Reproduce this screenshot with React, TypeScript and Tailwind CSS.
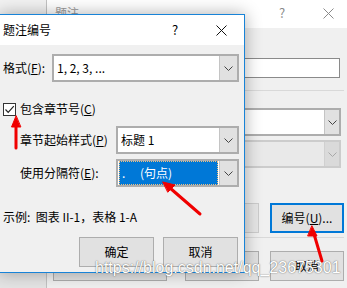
import React from "react"

const font = { fontFamily: '"Noto Sans CJK SC", "Noto Sans", sans-serif' }

function Chevron({ dim = false }: { dim?: boolean }) {
    return (
        <svg width="9" height="5" viewBox="0 0 9 5">
            <polyline points="0.5,0.5 4.5,4.5 8.5,0.5" fill="none" stroke={dim ? "#a8a8a8" : "#444"} strokeWidth="1" />
        </svg>
    )
}

function Combo({ w, children, btn = 18 }: { w: string; children?: React.ReactNode; btn?: number }) {
    return (
        <div className={`${w} h-[28px] flex border-2 border-[#adadad] bg-white`}>
            <div className="flex-1 flex items-center min-w-0">{children}</div>
            <div className="h-full flex items-center justify-center bg-[#e1e1e1] border-l border-[#c4c4c4]" style={{ width: btn }}>
                <Chevron />
            </div>
        </div>
    )
}

function Btn({ w, children, focus = false }: { w: string; children: React.ReactNode; focus?: boolean }) {
    return (
        <div className={`${w} h-[30px] flex items-center justify-center bg-[#e1e1e1] text-[12px] text-black ${focus ? "border-2 border-[#0078d7]" : "border border-[#adadad]"}`}>
            {children}
        </div>
    )
}

function CloseX({ color }: { color: string }) {
    return (
        <svg width="11" height="11" viewBox="0 0 11 11">
            <line x1="0.5" y1="0.5" x2="10.5" y2="10.5" stroke={color} strokeWidth="1" />
            <line x1="10.5" y1="0.5" x2="0.5" y2="10.5" stroke={color} strokeWidth="1" />
        </svg>
    )
}

export default function App() {
    return (
        <div className="relative w-[347px] h-[288px] overflow-hidden bg-[#e4e4e4]" style={font}>
            {/* window behind, top-left */}
            <div className="absolute left-0 top-0 w-[46px] h-[20px] bg-[#f2f2f2]" />

            {/* Background dialog: 题注 */}
            <div className="absolute left-[46px] top-[-2px] w-[305px] h-[300px] border-l border-[#c2c2c2] bg-[#f0f0f0] flex flex-col">
                <div className="h-[30px] bg-white flex items-center">
                    <span className="flex-1 pl-[8px] text-[12px] text-[#9a9a9a]">题注</span>
                    <div className="w-[46px] h-full flex items-center justify-center text-[13px] text-[#8a8a8a]">?</div>
                    <div className="w-[46px] h-full flex items-center justify-center"><CloseX color="#8a8a8a" /></div>
                </div>
                <div className="mt-[30px] self-end mr-[11px] w-[200px] h-[20px] bg-white border border-[#8a8a8a]" />
                <div className="mt-[12px] self-end mr-[7px] w-[250px] h-px bg-[#d9d9d9]" />
                <div className="mt-[17px] self-end mr-[10px]">
                    <Combo w="w-[220px]" btn={15} />
                </div>
                <div className="mt-[4px] self-end mr-[10px] w-[220px] h-[28px] flex border-2 border-[#cccccc] bg-[#e9e9e9]">
                    <div className="flex-1" />
                    <div className="w-[15px] h-full flex items-center justify-center bg-[#dadada] border-l border-[#d0d0d0]">
                        <Chevron dim />
                    </div>
                </div>
                <div className="mt-[35px] self-end mr-[7px] flex gap-[11px]">
                    <div className="w-[74px] h-[30px] flex items-center justify-center bg-[#e6e6e6] border border-[#cccccc] text-[12px] text-[#a0a0a0]">标签(L)</div>
                    <Btn w="w-[74px]" focus>编号(<u>U</u>)...</Btn>
                </div>
                <div className="mt-[4px] self-end mr-[7px] w-[250px] h-px bg-[#d9d9d9]" />
                <div className="mt-[13px] flex pl-[6px]">
                    <Btn w="w-[114px]">自动插入题注(A)...</Btn>
                    <div className="ml-[18px]"><Btn w="w-[74px]">确定</Btn></div>
                    <div className="ml-[11px]"><Btn w="w-[74px]">取消</Btn></div>
                </div>
            </div>

            {/* Front dialog: 题注编号 */}
            <div className="absolute left-[-1px] top-[14px] w-[246px] h-[259px] border border-[#1883d7] bg-[#f0f0f0] shadow-[0_0_16px_rgba(0,0,0,0.32)] flex flex-col text-[12px] text-black">
                <div className="h-[30px] bg-white flex items-center">
                    <span className="flex-1 pl-[3px] text-[12px]">题注编号</span>
                    <div className="w-[46px] h-full flex items-center justify-center text-[13px]">?</div>
                    <div className="w-[46px] h-full flex items-center justify-center"><CloseX color="#111" /></div>
                </div>

                <div className="mt-[9px] flex items-center">
                    <span className="w-[52px] pl-[3px]">格式(<u>F</u>):</span>
                    <Combo w="w-[187px]">
                        <span className="pl-[3px] text-[12px]">1, 2, 3, ...</span>
                    </Combo>
                </div>

                <div className="mt-[18px] flex items-center pl-[3px] gap-[4px]">
                    <div className="w-[13px] h-[13px] border border-[#333] bg-white flex items-center justify-center">
                        <svg width="11" height="11" viewBox="0 0 11 11">
                            <polyline points="1.5,5.5 4.2,8.3 9.8,2.2" fill="none" stroke="#222" strokeWidth="1.2" />
                        </svg>
                    </div>
                    <span>包含章节号(<u>C</u>)</span>
                </div>

                <div className="mt-[8px] flex items-center">
                    <span className="w-[116px] pl-[20px]">章节起始样式(<u>P</u>)</span>
                    <Combo w="w-[123px]">
                        <span className="pl-[3px]">标题 1</span>
                    </Combo>
                </div>

                <div className="mt-[5px] flex items-center">
                    <span className="w-[116px] pl-[20px]">使用分隔符(<u>E</u>):</span>
                    <Combo w="w-[123px]">
                        <div className="m-[1px] w-full h-[24px] bg-[#0078d7] border border-dotted border-[#f0c080] flex items-center text-white">
                            <span className="pl-[2px] w-[20px]">.</span>
                            <span>(句点)</span>
                        </div>
                    </Combo>
                </div>

                <div className="mt-[21px] pl-[3px] leading-[17px]">示例:&nbsp; 图表 II-1，表格 1-A</div>

                <div className="mt-[12px] flex justify-end gap-[9px] pr-[6px]">
                    <Btn w="w-[75px]">确定</Btn>
                    <Btn w="w-[75px]">取消</Btn>
                </div>
            </div>

            {/* Watermark */}
            <div
                className="absolute left-[95px] top-[258px] text-[16px] leading-[20px] text-white whitespace-nowrap"
                style={{ fontFamily: '"Liberation Sans", Arial, sans-serif', textShadow: "0 0 1px rgba(0,0,0,0.55), 0 0 2px rgba(0,0,0,0.25)" }}
            >
                https://blog.csdn.net/qq_23675301
            </div>

            {/* Red annotation arrows */}
            <svg className="absolute left-0 top-0 pointer-events-none" width="347" height="288" viewBox="0 0 347 288">
                <g stroke="#f00000" strokeWidth="3" strokeLinecap="round" fill="#f00000">
                    <line x1="16" y1="148" x2="16" y2="124" />
                    <polygon points="16,116 11.5,127 20.5,127" strokeWidth="1" />
                    <line x1="200" y1="214" x2="170" y2="188" />
                    <polygon points="163,182 175,185 168,192" strokeWidth="1" />
                    <line x1="322" y1="261" x2="314" y2="234" />
                    <polygon points="312,226 317,236 308,236" strokeWidth="1" />
                </g>
            </svg>
        </div>
    )
}
